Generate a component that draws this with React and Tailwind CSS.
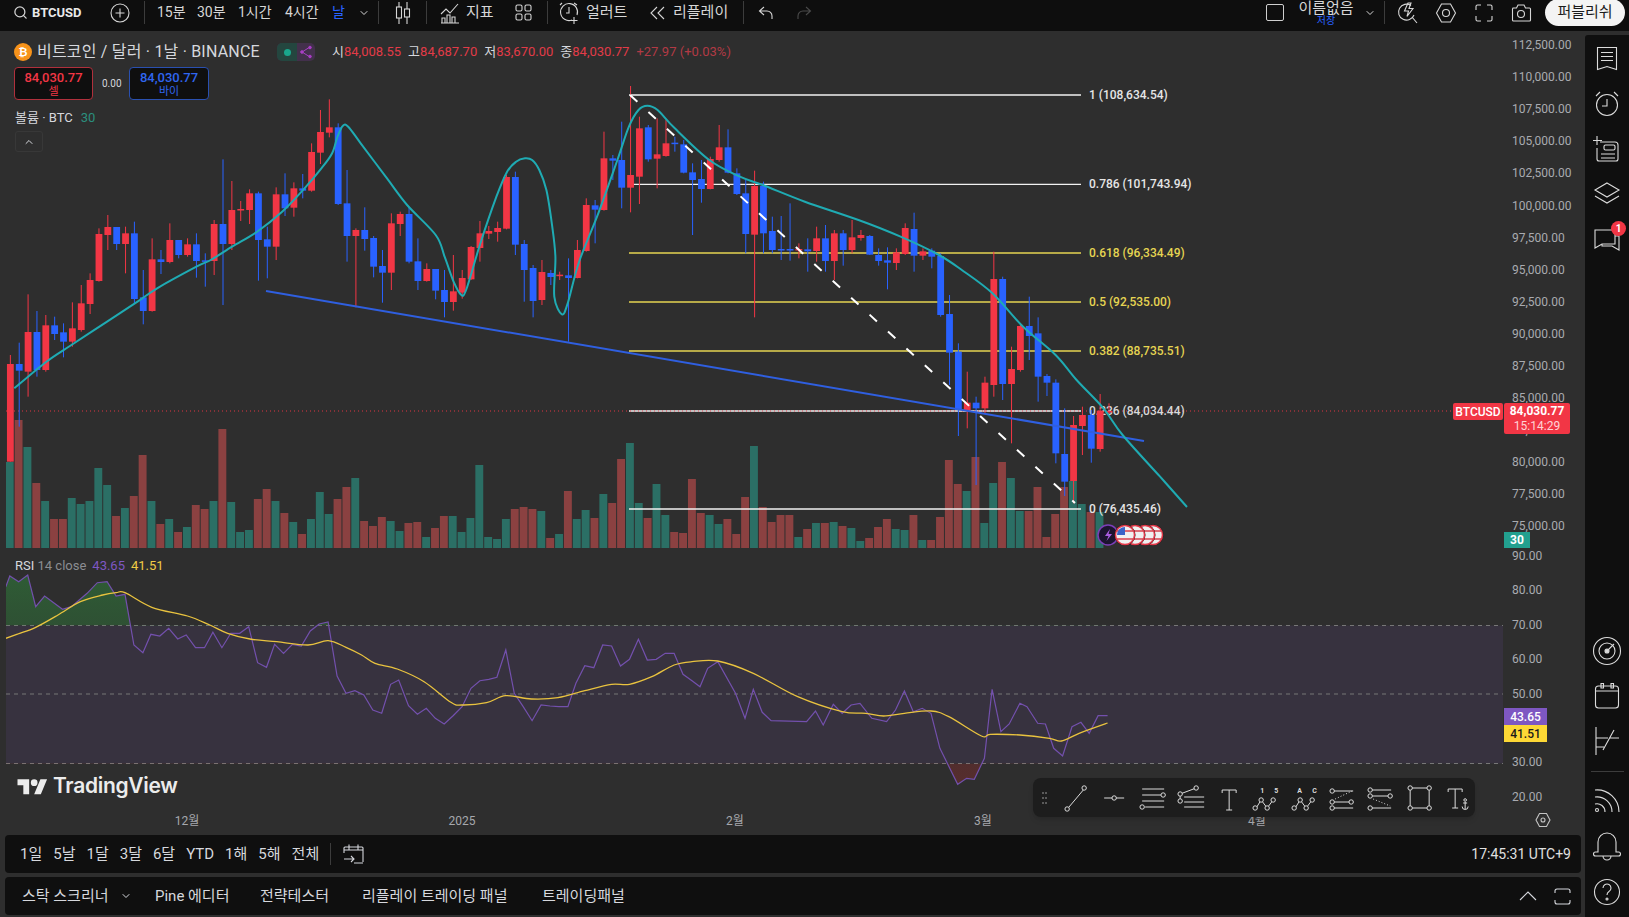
import React from 'react';
import { Search, ChevronDown, ChevronUp } from 'lucide-react';

const RED = '#f23645';
const BLUE = '#2962ff';
const STEP = 8.86;
const candleX = (i) => 10.36 + i * STEP;

// [color, bodyTop, bodyBottom, wickHigh, wickLow] read off the chart, first batch is y = 100 + v / 3
const CANDLES_LEFT = [
  ['r', 792, 1085, 765, 1085], ['b', 792, 812, 728, 980], ['r', 696, 815, 583, 890], ['b', 696, 810, 633, 830],
  ['r', 676, 810, 645, 815], ['b', 676, 702, 650, 720], ['b', 697, 725, 670, 772], ['r', 685, 725, 607, 740],
  ['r', 610, 690, 555, 695], ['r', 540, 612, 520, 642], ['r', 402, 543, 385, 545], ['r', 381, 405, 345, 450],
  ['b', 381, 432, 381, 450], ['r', 400, 432, 380, 520], ['b', 400, 597, 365, 610], ['b', 592, 633, 510, 673],
  ['r', 478, 633, 415, 635], ['b', 478, 486, 450, 522], ['r', 420, 486, 370, 490], ['b', 420, 465, 420, 475],
  ['r', 433, 465, 415, 470], ['b', 433, 483, 400, 533], ['b', 481, 484, 460, 560], ['r', 372, 483, 360, 525],
  ['b', 372, 432, 178, 615], ['r', 330, 432, 243, 450], ['r', 327, 329, 303, 363], ['r', 280, 330, 268, 372],
  ['b', 280, 420, 275, 542], ['b', 418, 440, 380, 535], ['r', 283, 440, 262, 480], ['b', 283, 325, 220, 348],
  ['r', 265, 323, 247, 350], ['b', 265, 272, 222, 295], ['r', 156, 272, 130, 275], ['r', 96, 158, 30, 192],
  ['r', 82, 98, -2, 112], ['b', 82, 312, 70, 315], ['b', 310, 408, 210, 485], ['r', 390, 408, 385, 622],
  ['b', 390, 417, 322, 452], ['b', 414, 500, 408, 532], ['b', 498, 518, 450, 608], ['r', 370, 518, 340, 570],
  ['r', 342, 372, 335, 408], ['b', 342, 485, 322, 490], ['b', 484, 543, 415, 570], ['r', 507, 543, 490, 545],
  ['b', 507, 572, 507, 598], ['b', 570, 606, 510, 652], ['r', 574, 606, 465, 632], ['r', 534, 578, 510, 596],
  ['r', 441, 538, 438, 540], ['r', 400, 444, 363, 485], ['r', 393, 401, 378, 417], ['r', 384, 396, 365, 425],
  ['r', 231, 386, 225, 388], ['b', 231, 434, 215, 465], ['b', 432, 510, 420, 605], ['b', 504, 603, 495, 652],
  ['r', 516, 600, 480, 615], ['b', 519, 531, 510, 555], ['r', 524, 527, 515, 540],
];

// second batch is y = 80 + v / 3
const CANDLES_RIGHT = [
  ['b', 586, 594, 535, 785], ['r', 510, 594, 480, 595], ['r', 375, 513, 355, 515], ['b', 376, 389, 360, 490],
  ['r', 235, 390, 155, 392], ['b', 235, 242, 225, 300], ['b', 240, 323, 125, 385], ['r', 285, 323, 18, 397],
  ['r', 145, 290, 110, 372], ['b', 142, 238, 135, 245], ['r', 223, 236, 115, 325], ['r', 190, 228, 120, 230],
  ['b', 188, 190, 170, 215], ['b', 193, 278, 180, 280], ['b', 277, 300, 250, 465], ['b', 297, 327, 240, 368],
  ['r', 237, 327, 230, 328], ['r', 202, 240, 135, 245], ['b', 202, 278, 148, 280], ['b', 280, 342, 265, 345],
  ['b', 340, 462, 300, 520], ['r', 318, 464, 272, 712], ['b', 318, 460, 305, 520], ['b', 453, 510, 410, 520],
  ['b', 507, 511, 408, 540], ['b', 507, 510, 370, 542], ['r', 507, 510, 490, 535], ['b', 508, 514, 475, 575],
  ['r', 475, 513, 440, 545], ['b', 475, 543, 435, 575], ['r', 460, 543, 450, 600], ['b', 460, 510, 450, 557],
  ['r', 472, 510, 420, 520], ['r', 465, 474, 450, 482], ['b', 468, 524, 465, 525], ['b', 525, 543, 505, 557],
  ['b', 541, 548, 502, 628], ['r', 517, 549, 505, 570], ['r', 444, 522, 430, 525], ['b', 447, 527, 398, 575],
  ['r', 514, 527, 505, 540], ['b', 512, 530, 505, 565], ['b', 528, 705, 520, 710], ['b', 702, 818, 645, 915],
  ['b', 815, 990, 790, 1068], ['r', 968, 992, 875, 1045], ['b', 968, 985, 950, 1215], ['r', 908, 985, 890, 1000],
  ['r', 597, 915, 515, 950], ['b', 597, 912, 590, 960], ['r', 867, 912, 800, 1090], ['r', 738, 870, 735, 875],
  ['b', 738, 768, 650, 840], ['b', 760, 890, 712, 965], ['b', 888, 908, 882, 948], ['b', 908, 1120, 898, 1150],
  ['b', 1122, 1205, 985, 1248], ['r', 1035, 1203, 1008, 1270], ['r', 1005, 1038, 980, 1125], ['b', 1005, 1106, 990, 1148],
  ['r', 992, 1107, 942, 1115], ['r', 993, 995, 970, 1002],
];

const toY = (offset) => ([c, t, b, h, l]) => ({ c, t: offset + t / 3, b: offset + b / 3, h: offset + h / 3, l: offset + l / 3 });
const CANDLES = [...CANDLES_LEFT.map(toY(100)), ...CANDLES_RIGHT.map(toY(80))];

// volume bars: [color, top y]
const VOLUMES = [
  ['g', 462], ['r', 420], ['g', 447], ['r', 483], ['g', 501], ['r', 519], ['r', 519], ['g', 498], ['g', 504], ['g', 501],
  ['g', 468], ['g', 485], ['r', 516], ['g', 508], ['r', 496], ['r', 455], ['g', 501], ['r', 524], ['g', 519], ['r', 532],
  ['g', 527], ['r', 505], ['r', 509], ['g', 501], ['r', 429], ['g', 502], ['g', 532], ['g', 530], ['r', 499], ['r', 489],
  ['g', 501], ['r', 513], ['g', 522], ['r', 534], ['g', 519], ['g', 492], ['g', 514], ['r', 499], ['r', 487], ['g', 478],
  ['r', 521], ['r', 526], ['r', 517], ['g', 521], ['g', 531], ['r', 523], ['r', 522], ['g', 537], ['r', 528], ['r', 516],
  ['g', 516], ['g', 532], ['g', 518], ['g', 465], ['g', 537], ['g', 539], ['g', 519], ['r', 509], ['r', 507], ['r', 509],
  ['g', 511], ['r', 538], ['g', 534], ['r', 491], ['g', 519], ['g', 510], ['r', 518], ['g', 494], ['r', 503], ['r', 459],
  ['g', 443], ['g', 503], ['r', 518], ['g', 484], ['g', 515], ['r', 532], ['r', 533], ['r', 479], ['r', 513], ['g', 515],
  ['g', 524], ['r', 519], ['r', 534], ['r', 497], ['g', 446], ['r', 507], ['r', 522], ['r', 515], ['r', 515], ['g', 537],
  ['r', 529], ['g', 523], ['r', 523], ['g', 522], ['r', 526], ['g', 528], ['g', 541], ['r', 538], ['r', 527], ['r', 519],
  ['g', 529], ['g', 530], ['r', 515], ['g', 540], ['r', 540], ['r', 517], ['r', 460], ['r', 484], ['g', 491], ['r', 457],
  ['g', 523], ['g', 483], ['r', 462], ['g', 478], ['g', 511], ['r', 511], ['r', 487], ['r', 537], ['r', 514], ['r', 487],
  ['g', 481], ['g', 504], ['r', 512], ['g', 512],
];

const EMA = [
  ...[[40, 865], [130, 785], [200, 735], [300, 665], [385, 605], [440, 565], [550, 500], [590, 480], [650, 440], [720, 395], [790, 335], [850, 268], [900, 205], [930, 160], [945, 110], [960, 77], [975, 80], [1010, 130], [1080, 230], [1140, 315], [1220, 405], [1245, 470], [1270, 545], [1290, 583], [1305, 570], [1345, 430], [1390, 290], [1420, 215], [1445, 185], [1470, 175], [1490, 180], [1510, 210], [1530, 270], [1545, 370], [1555, 470]].map(([u, v]) => [u / 2.8, 100 + v / 3]),
  ...[[-15, 650], [5, 703], [20, 670], [50, 545], [100, 400], [150, 240], [180, 140], [205, 90], [228, 77], [255, 90], [300, 145], [390, 240], [470, 290], [530, 315], [640, 365], [780, 420], [890, 470], [990, 525], [1050, 570], [1130, 640], [1210, 740], [1295, 825], [1350, 900], [1420, 985], [1470, 1065], [1568, 1190]].map(([u, v]) => [560 + u / 2.613, 80 + v / 3]),
  [1187, 507],
];

const RSI = [
  ...[[13, 110], [22, 78], [42, 95], [62, 75], [80, 170], [100, 138], [140, 178], [160, 170], [195, 130], [218, 98], [240, 95], [260, 138], [280, 133], [300, 285], [320, 308], [338, 253], [358, 258], [378, 235], [398, 267], [417, 255], [438, 293], [458, 293], [477, 247], [497, 293], [517, 250], [537, 250], [557, 230], [577, 338], [597, 352], [615, 283], [635, 310], [655, 283], [675, 288], [695, 243], [715, 222], [735, 216], [755, 378], [775, 430], [795, 422], [815, 435], [835, 480], [855, 490], [875, 403], [893, 390], [915, 467], [935, 493], [955, 475], [975, 505], [995, 522], [1015, 497], [1035, 470], [1055, 415], [1075, 392], [1095, 388], [1113, 382], [1133, 300], [1152, 430], [1172, 470], [1192, 512], [1212, 465], [1232, 468], [1252, 470], [1272, 470], [1290, 400], [1310, 347], [1330, 353], [1350, 285], [1370, 288], [1390, 348], [1410, 328], [1430, 268], [1450, 330], [1470, 328], [1490, 310], [1510, 310], [1530, 373], [1550, 392]].map(([u, v]) => [u / 2.24, 550 + v / 3]),
  ...[[0, 410], [13, 355], [30, 335], [60, 430], [76, 505], [90, 418], [105, 487], [120, 512], [180, 515], [195, 483], [208, 525], [225, 463], [240, 490], [255, 465], [270, 460], [290, 505], [315, 515], [330, 480], [345, 423], [360, 485], [375, 475], [390, 490], [405, 595], [435, 703], [450, 685], [463, 688], [480, 625], [493, 418], [508, 545], [522, 522], [540, 460], [552, 470], [570, 520], [583, 522], [597, 595], [612, 618], [628, 530], [643, 517], [657, 550], [672, 497], [688, 497]].map(([u, v]) => [700 + u / 1.688, 550 + v / 3]),
];

const RSI_MA = [
  ...[[13, 265], [40, 252], [80, 232], [130, 195], [180, 155], [230, 135], [260, 128], [280, 128], [340, 172], [420, 198], [470, 225], [510, 250], [560, 267], [620, 275], [690, 285], [735, 272], [775, 292], [810, 315], [840, 340], [890, 357], [950, 395], [1010, 457], [1035, 465], [1090, 458], [1133, 437], [1190, 447], [1250, 443], [1310, 422], [1370, 403], [1410, 403], [1460, 380], [1510, 345], [1550, 335]].map(([u, v]) => [u / 2.24, 550 + v / 3]),
  ...[[30, 333], [90, 370], [165, 440], [240, 485], [280, 490], [310, 498], [345, 490], [390, 483], [420, 500], [475, 558], [490, 553], [540, 555], [590, 565], [610, 573], [640, 550], [688, 519]].map(([u, v]) => [700 + u / 1.688, 550 + v / 3]),
];

const FIBS = [
  { y: 95, label: '1 (108,634.54)', color: '#f2f2f2', text: '#e6e6e6' },
  { y: 184.3, label: '0.786 (101,743.94)', color: '#f2f2f2', text: '#e6e6e6' },
  { y: 253, label: '0.618 (96,334.49)', color: '#e6d552', text: '#e6d552' },
  { y: 302, label: '0.5 (92,535.00)', color: '#e6d552', text: '#e6d552' },
  { y: 351, label: '0.382 (88,735.51)', color: '#e6d552', text: '#e6d552' },
  { y: 411, label: '0.236 (84,034.44)', color: '#f2f2f2', text: '#d8d8d8' },
  { y: 509, label: '0 (76,435.46)', color: '#f2f2f2', text: '#e6e6e6' },
];

const PRICES = ['112,500.00', '110,000.00', '107,500.00', '105,000.00', '102,500.00', '100,000.00', '97,500.00', '95,000.00', '92,500.00', '90,000.00', '87,500.00', '85,000.00', '82,500.00', '80,000.00', '77,500.00', '75,000.00'];
const RSI_TICKS = ['90.00', '80.00', '70.00', '60.00', '50.00', '', '30.00', '20.00'];
const MONTHS = [['12월', 187], ['2025', 462], ['2월', 735], ['3월', 983], ['4월', 1257]];

const pts = (list) => list.map(([x, y]) => `${x.toFixed(1)},${y.toFixed(1)}`).join(' ');

// catmull-rom so the ema doesn't look like a polyline
function smooth(list) {
  let d = `M${list[0][0]} ${list[0][1]}`;
  for (let i = 0; i < list.length - 1; i++) {
    const p0 = list[i - 1] || list[i];
    const p1 = list[i];
    const p2 = list[i + 1];
    const p3 = list[i + 2] || p2;
    d += ` C${(p1[0] + (p2[0] - p0[0]) / 6).toFixed(1)} ${(p1[1] + (p2[1] - p0[1]) / 6).toFixed(1)} ${(p2[0] - (p3[0] - p1[0]) / 6).toFixed(1)} ${(p2[1] - (p3[1] - p1[1]) / 6).toFixed(1)} ${p2[0].toFixed(1)} ${p2[1].toFixed(1)}`;
  }
  return d;
}

function Ico({ w = 22, h = 22, vb = '0 0 22 22', children, className = '' }) {
  return (
    <svg width={w} height={h} viewBox={vb} fill="none" stroke="currentColor" strokeWidth="1.1" className={`shrink-0 ${className}`}>
      {children}
    </svg>
  );
}

function Divider({ className = '' }) {
  return <div className={`w-px h-[23px] bg-[#3c3c3c] shrink-0 ${className}`} />;
}

function TopBar() {
  return (
    <div className="h-[31px] pb-[6px] shrink-0 bg-[#0e0e0e] flex items-center text-[14px] text-[#d6d6d6] whitespace-nowrap overflow-hidden">
      <Search size={15} className="ml-[13px] shrink-0" />
      <span className="ml-[4px] w-[51px] text-[13px] font-bold text-[#e8e8e8]">BTCUSD</span>
      <Ico w={20} h={20} vb="0 0 20 20" className="ml-[27px]">
        <circle cx="10" cy="10" r="9" />
        <path d="M10 5.500v9M5.500 10h9" />
      </Ico>
      <Divider className="ml-[14px]" />
      <span className="ml-[12px] w-[27px]">15분</span>
      <span className="ml-[13px] w-[28px]">30분</span>
      <span className="ml-[13px] w-[34px]">1시간</span>
      <span className="ml-[13px] w-[34px]">4시간</span>
      <span className="ml-[13px] w-[12px] text-[#2962ff]">날</span>
      <ChevronDown size={12} className="ml-[14px] shrink-0" />
      <Divider className="ml-[8px]" />
      <Ico w={18} h={24} vb="0 0 18 24" className="ml-[15px]">
        <path d="M5 1v22M13 1v22" />
        <rect x="2.500" y="6" width="5" height="11" fill="#0e0e0e" />
        <rect x="10.500" y="8" width="5" height="8" fill="#0e0e0e" />
      </Ico>
      <Divider className="ml-[14px]" />
      <Ico w={20} h={22} vb="0 0 20 22" className="ml-[13px]">
        <path d="M1 12l5-5 4 4 8-9" />
        <path d="M2 21v-5h3v5M7 21v-8h3v8M12 21v-6h3v6M1 21h18" />
      </Ico>
      <span className="ml-[6px] w-[28px] text-[15px]">지표</span>
      <Ico w={17} h={17} vb="0 0 17 17" className="ml-[21px]">
        <rect x="1" y="1" width="6" height="6" rx="1.500" />
        <rect x="10" y="1" width="6" height="6" rx="1.500" />
        <rect x="1" y="10" width="6" height="6" rx="1.500" />
        <rect x="10" y="10" width="6" height="6" rx="1.500" />
      </Ico>
      <Divider className="ml-[15px]" />
      <Ico w={21} h={24} vb="0 0 21 24" className="ml-[11px]">
        <path d="M13 19a8.500 8.500 0 1 1 5-5" />
        <path d="M10 6v6H7M3 2L1 4M15 2l3 2M15 16v7M11.500 19.500h7" />
      </Ico>
      <span className="ml-[6px] w-[42px] text-[15px]">얼러트</span>
      <Ico w={15} h={14} vb="0 0 15 14" className="ml-[22px]">
        <path d="M7 1L1 7l6 6M14 1L8 7l6 6" />
      </Ico>
      <span className="ml-[8px] w-[56px] text-[15px]">리플레이</span>
      <Divider className="ml-[14px]" />
      <Ico w={16} h={14} vb="0 0 16 14" className="ml-[14px]">
        <path d="M6 1L1.500 5 6 9M2 5h7a5 5 0 0 1 5 5v3" />
      </Ico>
      <Ico w={16} h={14} vb="0 0 16 14" className="ml-[22px] text-[#4a4a4a]">
        <path d="M10 1l4.500 4L10 9M14 5H7a5 5 0 0 0-5 5v3" />
      </Ico>
      <div className="ml-auto flex items-center pr-[4px]">
        <div className="w-[18px] h-[17px] border border-[#cfcfcf] rounded-[2px]" />
        <div className="ml-[14px] w-[56px] flex flex-col items-center">
          <span className="text-[15px] leading-[15px]">이름없음</span>
          <span className="text-[10px] leading-[9px] text-[#2962ff]">저장</span>
        </div>
        <ChevronDown size={12} className="ml-[10px] shrink-0" />
        <Divider className="ml-[8px]" />
        <Ico className="ml-[12px]">
          <path d="M14 3.500A8 8 0 1 0 17 13M15 15l5 6" />
          <path d="M11 1L7.500 9h4L10 14.500 16 6.500h-4L14 1z" />
        </Ico>
        <Ico className="ml-[16px]">
          <path d="M6.500 2h9L20.500 11l-5 9h-9l-5-9z" />
          <circle cx="11" cy="11" r="3.500" />
        </Ico>
        <Ico w={20} h={20} vb="0 0 20 20" className="ml-[17px]">
          <path d="M2 7V3.500A1.500 1.500 0 0 1 3.500 2H7M13 2h3.500A1.500 1.500 0 0 1 18 3.500V7M18 13v3.500a1.500 1.500 0 0 1-1.500 1.500H13M7 18H3.500A1.500 1.500 0 0 1 2 16.500V13" />
        </Ico>
        <Ico className="ml-[16px]">
          <path d="M2.500 6h4l1.500-3h6l1.500 3h4a1 1 0 0 1 1 1v11a1 1 0 0 1-1 1h-16a1 1 0 0 1-1-1V7a1 1 0 0 1 1-1z" />
          <circle cx="11" cy="12" r="3.500" />
        </Ico>
        <button className="ml-[13px] w-[80px] h-[27px] rounded-full bg-[#f4f4f4] text-[#1c1c1c] text-[15px]">퍼블리쉬</button>
      </div>
    </div>
  );
}

function ChartCanvas() {
  return (
    <svg width="1505" height="804" viewBox="0 31 1505 804" className="absolute left-0 top-0">
      <defs>
        <linearGradient id="rsiUp" x1="0" y1="0" x2="0" y2="1">
          <stop offset="0" stopColor="#2f7a3a" stopOpacity="0.6" />
          <stop offset="1" stopColor="#2f7a3a" stopOpacity="0" />
        </linearGradient>
        <linearGradient id="rsiDown" x1="0" y1="0" x2="0" y2="1">
          <stop offset="0" stopColor="#a02c2c" stopOpacity="0" />
          <stop offset="1" stopColor="#a02c2c" stopOpacity="0.35" />
        </linearGradient>
        <clipPath id="aboveBand"><rect x="0" y="560" width="1505" height="65.500" /></clipPath>
        <clipPath id="belowBand"><rect x="0" y="763.500" width="1505" height="60" /></clipPath>
        <clipPath id="plot"><rect x="6" y="31" width="1499" height="804" /></clipPath>
      </defs>
      <g clipPath="url(#plot)">
        {VOLUMES.map(([c, top], i) => (
          <rect key={i} x={candleX(i) - 4.6} y={top} width="7.900" height={548 - top} fill={c === 'g' ? '#2b6f65' : '#8b4141'} />
        ))}
        {FIBS.map((f) => (
          <line key={f.y} x1="629" y1={f.y} x2="1081" y2={f.y} stroke={f.color} strokeWidth="1.300" />
        ))}
        <line x1="6" y1="411" x2="1453" y2="411" stroke={RED} strokeOpacity="0.9" strokeDasharray="1 3" />
      </g>
      <g fontSize="12" fontWeight="500">
        {FIBS.map((f) => (
          <text key={f.label} x="1089" y={f.y + 4} fill={f.text}>{f.label}</text>
        ))}
      </g>
      <g clipPath="url(#plot)">
        {CANDLES.map((k, i) => {
          const x = candleX(i);
          const fill = k.c === 'r' ? RED : BLUE;
          return (
            <g key={i} fill={fill}>
              <rect x={x - 0.5} y={k.h} width="1" height={k.l - k.h} />
              <rect x={x - 3.4} y={k.t} width="6.800" height={Math.max(k.b - k.t, 1.5)} />
            </g>
          );
        })}
        <line x1="266" y1="291" x2="1144" y2="441" stroke="#2f5fe0" strokeWidth="2" />
        <line x1="630" y1="95" x2="1075" y2="503" stroke="#ffffff" strokeWidth="2" strokeDasharray="10 15" />
        <path d={smooth(EMA)} stroke="#1fabb3" strokeWidth="2" fill="none" />

        <circle cx="1108" cy="535" r="10" fill="#1c1430" stroke="#7b3fb8" strokeWidth="1.500" />
        <path d="M1110 529l-5 7h3.500l-2 5 5.500-7h-3.500z" fill="#a95ce0" />
        {[1153, 1145, 1135, 1125].map((cx) => (
          <g key={cx}>
            <circle cx={cx} cy="535" r="10.500" fill="#1a1a1a" />
            <circle cx={cx} cy="535" r="9.500" fill="#f0f0f0" stroke="#e5394a" strokeWidth="1.500" />
            <path d={`M${cx - 8} 531h16M${cx - 8} 539h16`} stroke="#d9404e" strokeWidth="1.500" />
          </g>
        ))}
        <path d="M1117 535a8 8 0 0 1 8-8v8z" fill="#3a64c8" />

        <rect x="6" y="625.500" width="1497" height="138" fill="#37323f" />
        {[625.500, 694, 763.500].map((y) => (
          <line key={y} x1="6" y1={y} x2="1503" y2={y} stroke="#777" strokeDasharray="4 4" />
        ))}
        <polygon points={`${pts(RSI)} ${RSI[RSI.length - 1][0]},625.500 ${RSI[0][0]},625.500`} fill="url(#rsiUp)" clipPath="url(#aboveBand)" />
        <polygon points={`${pts(RSI)} ${RSI[RSI.length - 1][0]},763.500 ${RSI[0][0]},763.500`} fill="url(#rsiDown)" clipPath="url(#belowBand)" />
        <polyline points={pts(RSI)} fill="none" stroke="#7350ad" strokeWidth="1.200" />
        <path d={smooth(RSI_MA)} fill="none" stroke="#e9c33f" strokeWidth="1.300" />
      </g>
      <g fontSize="12" fill="#a6a8ad" textAnchor="middle">
        {MONTHS.map(([m, x]) => (
          <text key={m} x={x} y="825">{m}</text>
        ))}
      </g>
    </svg>
  );
}

function Legend() {
  return (
    <div className="absolute left-[14px] top-[12px] flex flex-col items-start whitespace-nowrap">
      <div className="h-[18px] flex items-center">
        <svg width="18" height="18" viewBox="0 0 18 18" className="shrink-0">
          <circle cx="9" cy="9" r="9" fill="#f7931a" />
          <text x="9" y="13" textAnchor="middle" fontSize="11" fontWeight="700" fill="#fff">₿</text>
        </svg>
        <span className="ml-[5px] w-[224px] text-[16px] tracking-[0.2px] text-[#d6d8dd]">비트코인 / 달러 · 1날 · BINANCE</span>
        <div className="ml-[16px] w-[38px] h-[18px] rounded-[5px] bg-[#43304c] flex items-center overflow-hidden">
          <div className="w-[20px] h-full bg-[#24463f] flex items-center justify-center">
            <span className="w-[7px] h-[7px] rounded-full bg-[#1aa68c]" />
          </div>
          <svg width="14" height="14" viewBox="0 0 14 14" fill="#a83fc4" stroke="#a83fc4" className="ml-[2px]">
            <path d="M11 2L3 7l8 5" fill="none" />
            <circle cx="11" cy="2.500" r="1.300" />
            <circle cx="3" cy="7" r="1.300" />
            <circle cx="11" cy="11.500" r="1.300" />
          </svg>
        </div>
        <div className="ml-[17px] flex text-[13px] text-[#d6d8dd] gap-[7px]">
          <span>시<span className="text-[#e23b48]">84,008.55</span></span>
          <span>고<span className="text-[#e23b48]">84,687.70</span></span>
          <span>저<span className="text-[#e23b48]">83,670.00</span></span>
          <span>종<span className="text-[#e23b48]">84,030.77</span></span>
          <span className="text-[#b23a45]">+27.97 (+0.03%)</span>
        </div>
      </div>
      <div className="mt-[6px] flex items-center">
        <div className="w-[79px] h-[33px] rounded-[4px] border border-[#b0303c] bg-[#0f0f0f] flex flex-col items-center justify-center text-[#f23645]">
          <span className="text-[13px] leading-[16px] font-medium">84,030.77</span>
          <span className="text-[11px] leading-[11px]">셀</span>
        </div>
        <span className="ml-[9px] w-[27px] text-[10px] text-[#d6d8dd]">0.00</span>
        <div className="w-[80px] h-[33px] rounded-[4px] border border-[#2a50b0] bg-[#0f0f0f] flex flex-col items-center justify-center text-[#2f66f0]">
          <span className="text-[13px] leading-[16px] font-medium">84,030.77</span>
          <span className="text-[11px] leading-[11px]">바이</span>
        </div>
      </div>
      <div className="mt-[10px] h-[16px] pl-[1px] flex items-center text-[13px] text-[#d6d8dd]">
        볼륨 · BTC<span className="ml-[8px] text-[#2b8f7e]">30</span>
      </div>
      <div className="mt-[5px] ml-[1px] w-[28px] h-[21px] rounded-[3px] border border-[#383838] flex items-center justify-center text-[#d6d8dd]">
        <ChevronUp size={12} />
      </div>
    </div>
  );
}

function Logo() {
  return (
    <div className="absolute left-[17px] top-[739px] flex items-center gap-[5px] text-[#ececec]">
      <svg width="31" height="20" viewBox="0 0 36 24" fill="currentColor">
        <path d="M14 22H7V11H0V4h14v18zM28 22h-8l7.500-18h8L28 22z" />
        <circle cx="20" cy="8" r="4" />
      </svg>
      <span className="text-[21px] font-semibold font-[Inter,sans-serif] tracking-[-0.3px]">TradingView</span>
    </div>
  );
}

const T = ({ children }) => (
  <svg width="38.300" height="32" viewBox="0 0 38 32" fill="none" stroke="currentColor" strokeWidth="1" className="shrink-0">{children}</svg>
);
const Dot = ({ x, y }) => <circle cx={x} cy={y} r="2.200" fill="#1c1c1c" />;

function DrawingBar() {
  return (
    <div className="absolute left-[1033px] top-[747px] w-[442px] h-[39px] rounded-[8px] bg-[#1d1d1d] shadow-md flex items-center text-[#dcdcdc]">
      <div className="ml-[9px] mr-[12px] w-[7px] grid grid-cols-2 gap-[3px]">
        {[0, 1, 2, 3, 4, 5].map((i) => <span key={i} className="w-[2px] h-[2px] bg-[#5a5a5a]" />)}
      </div>
      <T><path d="M11 26L27 7" /><Dot x={10} y={27} /><Dot x={27} y={6} /></T>
      <T><path d="M9 16h20" /><Dot x={19} y={16} /></T>
      <T><path d="M8 7h22M8 13h19M8 19h22M11 25h19" /><Dot x={29} y={13} /><Dot x={8} y={25} /></T>
      <T><path d="M8 12L24 6M8 12v7M12 20h20M12 25h20M12 15h20" /><Dot x={8} y={12} /><Dot x={24} y={6} /><Dot x={8} y={19} /></T>
      <T><path d="M12 8h14M19 8v20M12 8v3M26 8v3M16 28h6" /></T>
      <T>
        <path d="M8 26L13 18 19 26 25 18" /><Dot x={7} y={26} /><Dot x={13} y={18} /><Dot x={19} y={26} /><Dot x={25} y={18} />
        <text x="12" y="11" fontSize="7" fill="currentColor" stroke="none" fontWeight="700">1</text>
        <text x="26" y="11" fontSize="7" fill="currentColor" stroke="none" fontWeight="700">5</text>
      </T>
      <T>
        <path d="M8 26L13 18 19 26 25 18" /><Dot x={7} y={26} /><Dot x={13} y={18} /><Dot x={19} y={26} /><Dot x={25} y={18} />
        <text x="10" y="11" fontSize="7" fill="currentColor" stroke="none" fontWeight="700">A</text>
        <text x="25" y="11" fontSize="7" fill="currentColor" stroke="none" fontWeight="700">C</text>
      </T>
      <T><path d="M8 9h20M8 20h20M8 26h20" /><path d="M10 17l17-8" strokeDasharray="1 2" /><Dot x={7} y={9} /><Dot x={7} y={20} /><Dot x={26} y={20} /><Dot x={7} y={26} /></T>
      <T><path d="M8 8h20M8 14h20M8 26h20" /><path d="M10 17l17 7" strokeDasharray="1 2" /><Dot x={7} y={8} /><Dot x={7} y={14} /><Dot x={27} y={14} /><Dot x={7} y={26} /></T>
      <T><rect x="8" y="6" width="19" height="20" /><Dot x={8} y={6} /><Dot x={27} y={6} /><Dot x={8} y={26} /><Dot x={27} y={26} /></T>
      <T><path d="M8 7h14M15 7v19M8 7v3M22 7v3M12 26h6" /><circle cx="25" cy="18" r="1.300" /><path d="M25 20v7M22 24.500a3 3 0 0 0 6 0M23 21h4" /></T>
    </div>
  );
}

function PriceAxis() {
  return (
    <div className="absolute left-[1505px] top-0 w-[76px] pl-[7px] -mt-[2px] flex flex-col text-[12px] text-[#a9abb0]">
      {PRICES.map((p) => (
        <div key={p} className="h-[32.1px] shrink-0 flex items-center">{p}</div>
      ))}
      <div className="-mt-[3.700px]" />
      {RSI_TICKS.map((p, i) => (
        <div key={i} className="h-[34.4px] shrink-0 flex items-center">{p}</div>
      ))}
    </div>
  );
}

function Badges() {
  return (
    <>
      <div className="absolute left-[1453px] top-[372px] w-[50px] h-[17px] rounded-[2px] bg-[#f23645] text-white text-[12px] font-medium flex items-center justify-center">BTCUSD</div>
      <div className="absolute left-[1504px] top-[372px] w-[66px] h-[31px] rounded-[2px] bg-[#f23645] flex flex-col items-center justify-center">
        <span className="text-[12px] leading-[15px] font-bold text-white">84,030.77</span>
        <span className="text-[12px] leading-[15px] text-[#ffd3d6]">15:14:29</span>
      </div>
      <div className="absolute left-[1504px] top-[501px] w-[26px] h-[16px] bg-[#22a08f] text-white text-[12px] font-bold flex items-center justify-center">30</div>
      <div className="absolute left-[1504px] top-[677px] w-[43px] h-[17px] bg-[#7e57c2] text-white text-[12px] font-medium flex items-center justify-center">43.65</div>
      <div className="absolute left-[1504px] top-[694px] w-[43px] h-[17px] bg-[#fdd835] text-[#1a1a1a] text-[12px] font-medium flex items-center justify-center">41.51</div>
      <Ico w={16} h={16} vb="0 0 16 16" className="absolute left-[1535px] top-[781px] text-[#c4c4c4]">
        <path d="M4.500 1.500h7L15 8l-3.500 6.500h-7L1 8z" />
        <circle cx="8" cy="8" r="2" />
      </Ico>
    </>
  );
}

function RangeBar() {
  return (
    <div className="h-[38px] ml-[5px] shrink-0 rounded-[4px] bg-[#0f0f0f] flex items-center pl-[15px] pr-[10px] text-[15px] text-[#d6d8dd] whitespace-nowrap">
      {['1일', '5날', '1달', '3달', '6달', 'YTD', '1해', '5해', '전체'].map((r) => (
        <span key={r} className="mr-[11px]">{r}</span>
      ))}
      <div className="w-px h-[22px] bg-[#3c3c3c]" />
      <Ico w={21} h={22} vb="0 0 21 22" className="ml-[12px]">
        <path d="M20 19V5a1 1 0 0 0-1-1H2a1 1 0 0 0-1 1v5M1 7h19M6 1.500v5M15 1.500v5M20 20h-9M1 16h10M8 13l3 3-3 3" />
      </Ico>
      <span className="ml-auto text-[14px] text-[#e0e0e0]">17:45:31 UTC+9</span>
    </div>
  );
}

function TabBar() {
  return (
    <div className="h-[38px] ml-[5px] mt-[4px] shrink-0 rounded-[4px] bg-[#0f0f0f] flex items-center pl-[17px] pr-[10px] text-[15px] text-[#d6d8dd] whitespace-nowrap">
      <span className="w-[88px]">스탁 스크리너</span>
      <ChevronDown size={12} className="ml-[10px]" />
      <span className="ml-[23px] w-[72px]">Pine 에디터</span>
      <span className="ml-[33px] w-[69px]">전략테스터</span>
      <span className="ml-[33px] w-[148px]">리플레이 트레이딩 패널</span>
      <span className="ml-[32px] w-[83px]">트레이딩패널</span>
      <Ico w={20} h={12} vb="0 0 20 12" className="ml-auto">
        <path d="M2 10L10 2l8 8" />
      </Ico>
      <Ico w={17} h={17} vb="0 0 17 17" className="ml-[16px]">
        <path d="M1 5V3a2 2 0 0 1 2-2h11a2 2 0 0 1 2 2v2M16 12v2a2 2 0 0 1-2 2H3a2 2 0 0 1-2-2v-2" />
      </Ico>
    </div>
  );
}

const S = ({ children, badge, h = 'h-[45px]' }) => (
  <div className={`relative w-[44px] shrink-0 flex items-center justify-center ${h}`}>
    <svg width="30" height="30" viewBox="0 0 30 30" fill="none" stroke="currentColor" strokeWidth="1.100">{children}</svg>
    {badge && (
      <span className="absolute right-[3px] top-[4px] w-[15px] h-[15px] rounded-full bg-[#f23645] text-white text-[10px] font-bold flex items-center justify-center">{badge}</span>
    )}
  </div>
);

function Sidebar() {
  return (
    <div className="w-[44px] ml-[4px] mt-[4px] shrink-0 bg-[#0f0f0f] rounded-tl-[3px] flex flex-col items-center text-[#dcdcdc]">
      <div className="pt-[1.500px]" />
      <S><path d="M5.500 3.500h19v22l-9.500-3-9.500 3zM9 8.500h12M9 12.500h12M9 16.500h12" /></S>
      <S><circle cx="15" cy="16" r="10.500" /><path d="M15 10v7h-5M4 7l4-4M26 7l-4-4" /></S>
      <S><path d="M8 8h15a3 3 0 0 1 3 3v14a2 2 0 0 1-2 2H7a2 2 0 0 1-2-2V14" /><path d="M5 2v9M1 6.500h9" /><rect x="12" y="11" width="11" height="5" rx="1.500" /><path d="M9 20h14M9 24h14" /></S>
      <S><path d="M15 4l12 7-12 7-12-7z" /><path d="M3 17l12 7 12-7" /></S>
      <S badge="1"><path d="M3 6h20v14H10l-7 4z" /><path d="M23 12h4v14l-7-4H10v-2" /></S>
      <div className="mt-auto" />
      <S h="h-[46px]"><circle cx="15" cy="15" r="13.500" /><circle cx="15" cy="15" r="8" /><circle cx="15" cy="15" r="2" fill="currentColor" /><path d="M15 15l7-7" /></S>
      <S h="h-[44px]"><rect x="3.500" y="5" width="23" height="22" rx="3" /><path d="M3.500 10h23M9 2.500h2.500V7H9zM19 2.500h2.500V7H19z" /></S>
      <S h="h-[44px]"><path d="M4 2v28M4 13h12M4 22h8M27 13H17M11 25L22 5" /></S>
      <div className="w-[33px] h-px bg-[#3c3c3c] mt-[9px] mb-[4px]" />
      <S h="h-[46px]"><circle cx="5" cy="26" r="1.500" /><path d="M3 20a8 8 0 0 1 10 8M3 13a15 15 0 0 1 17 15M3 6a22 22 0 0 1 24 22" /></S>
      <S h="h-[47px]"><path d="M15 2a9 9 0 0 0-9 9v10H3.500a1.500 1.500 0 0 0 0 4h23a1.500 1.500 0 0 0 0-4H24V11a9 9 0 0 0-9-9zM11 25a4 4 0 0 0 8 0" /></S>
      <S h="h-[46px]"><circle cx="15" cy="15" r="12.500" /><path d="M11 11a4 4 0 1 1 6 3.500c-1.500 1-2 2-2 3.500" /><circle cx="15" cy="22" r="1" /></S>
      <div className="pb-[2px]" />
    </div>
  );
}

export default function App() {
  return (
    <div className="w-[1629px] h-[917px] bg-[#2e2e2e] flex flex-col overflow-hidden font-[Roboto,'Noto_Sans_CJK_KR',sans-serif]">
      <TopBar />
      <div className="flex flex-1 min-h-0">
        <div className="w-[1581px] shrink-0 flex flex-col">
          <div className="relative h-[804px] shrink-0">
            <ChartCanvas />
            <Legend />
            <div className="absolute left-[15px] top-[527px] h-[16px] flex items-center gap-[6px] text-[13px] whitespace-nowrap">
              <span className="text-[#d6d8dd]">RSI <span className="text-[#8b8d92]">14 close</span></span>
              <span className="text-[#7e57c2]">43.65</span>
              <span className="text-[#f0cb45]">41.51</span>
            </div>
            <Logo />
            <DrawingBar />
            <PriceAxis />
            <Badges />
          </div>
          <RangeBar />
          <TabBar />
        </div>
        <Sidebar />
      </div>
    </div>
  );
}
